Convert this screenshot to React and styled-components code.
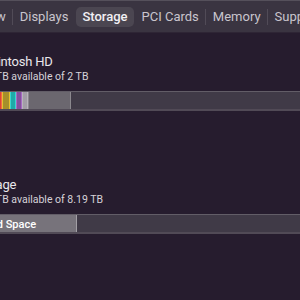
import React from "react";
import styled, { createGlobalStyle } from "styled-components";

const Global = createGlobalStyle`
  html, body { margin: 0; padding: 0; background: #261c2e; overflow: hidden; }
  body { font-family: Roboto, "Liberation Sans", sans-serif; -webkit-font-smoothing: antialiased; }
  #root { width: 300px; height: 300px; overflow: hidden; }
`;

const Window = styled.div`
  width: 300px;
  height: 300px;
  overflow: hidden;
  background: #261c2e;
`;

const TabBar = styled.div`
  height: 33px;
  box-sizing: border-box;
  background: #3a3441;
  border-top: 1px solid #55505b;
  border-bottom: 1px solid #2e2535;
  display: flex;
  align-items: center;
  margin-left: -53px;
  white-space: nowrap;
`;

const Tab = styled.div`
  flex: none;
  height: 20px;
  display: flex;
  align-items: center;
  padding: 0 6px;
  border-radius: 5px;
  font-size: 13px;
  color: ${(p) => (p.$active ? "#f2f0f4" : "#c9c5cd")};
  font-weight: ${(p) => (p.$active ? 500 : 400)};
  background: ${(p) => (p.$active ? "#4b4651" : "transparent")};
`;

const Sep = styled.div`
  flex: none;
  width: 1px;
  height: 16px;
  margin: 0 0.5px;
  background: ${(p) => (p.$hidden ? "transparent" : "#514b57")};
`;

const Content = styled.div`
  margin-left: -27px;
  margin-right: -30px;
  padding-top: 21px;
  display: flex;
  flex-direction: column;
  gap: 66px;
`;

const Volume = styled.div`
  display: flex;
  flex-direction: column;
`;

const Title = styled.div`
  font-size: 13px;
  line-height: 16px;
  color: #e9e7eb;
  letter-spacing: -0.2px;
  white-space: nowrap;
`;

const Sub = styled.div`
  font-size: 10.5px;
  line-height: 14px;
  color: #d6d3d9;
  white-space: nowrap;
`;

const Bar = styled.div`
  margin-top: 7px;
  height: 20px;
  box-sizing: border-box;
  display: flex;
  background: #403a47;
  border-top: 1px solid #625d67;
  border-bottom: 2px solid #514a56;
  overflow: hidden;
`;

const Segment = styled.div`
  flex: none;
  box-sizing: border-box;
  background: ${(p) => p.$fill};
  border: 1px solid ${(p) => p.$edge};
  margin-top: -1px;
  height: calc(100% + 3px);
  display: flex;
  align-items: center;
  padding-left: 4px;
  font-size: 11px;
  font-weight: 500;
  color: #ffffff;
  white-space: nowrap;
  overflow: hidden;
`;

export default function App() {
  return (
    <Window>
      <Global />
      <TabBar>
        <Tab>Overview</Tab>
        <Sep />
        <Tab>Displays</Tab>
        <Sep $hidden />
        <Tab $active>Storage</Tab>
        <Sep $hidden />
        <Tab>PCI Cards</Tab>
        <Sep />
        <Tab>Memory</Tab>
        <Sep />
        <Tab>Support</Tab>
      </TabBar>
      <Content>
        <Volume>
          <Title>Macintosh HD</Title>
          <Sub>1.49 TB available of 2 TB</Sub>
          <Bar>
            <Segment style={{ width: 29 }} $fill="#e0442f" $edge="#f06a4a" />
            <Segment style={{ width: 8 }} $fill="#a68f2b" $edge="#e6c12e" />
            <Segment style={{ width: 6 }} $fill="#1faaa8" $edge="#3ad6cf" />
            <Segment style={{ width: 5 }} $fill="#84509c" $edge="#a56cc2" />
            <Segment style={{ width: 4 }} $fill="#a29ea6" $edge="#b8b4bb" />
            <Segment style={{ width: 43 }} $fill="#6b676f" $edge="#8b888e" />
          </Bar>
        </Volume>
        <Volume>
          <Title>Storage</Title>
          <Sub>6.02 TB available of 8.19 TB</Sub>
          <Bar>
            <Segment style={{ width: 104 }} $fill="#77737b" $edge="#a29fa5">
              Used Space
            </Segment>
          </Bar>
        </Volume>
      </Content>
    </Window>
  );
}
